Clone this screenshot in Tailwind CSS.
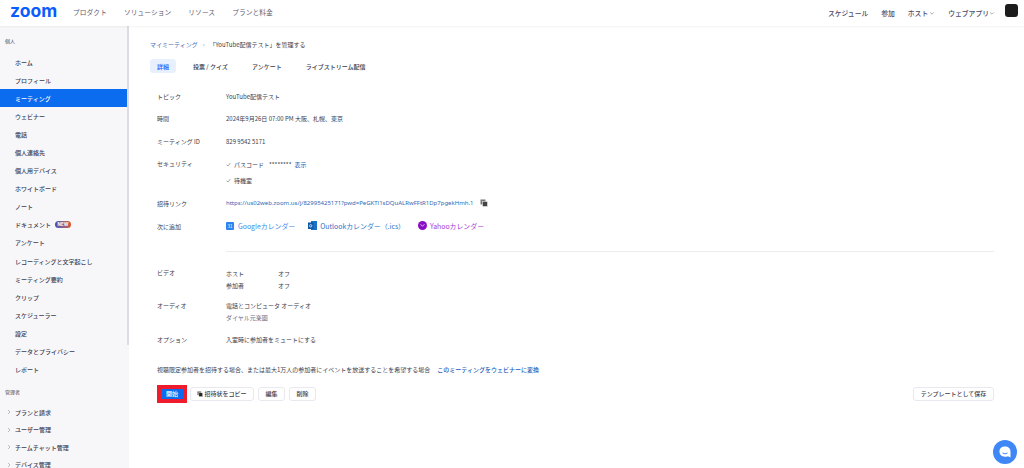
<!DOCTYPE html>
<html lang="ja">
<head>
<meta charset="utf-8">
<script src="https://cdn.jsdelivr.net/npm/@tailwindcss/browser@4"></script>
</head>
<body class="w-[1024px] h-[468px] overflow-hidden bg-white font-['Noto_Sans_CJK_JP','Noto_Sans',sans-serif] text-[6px] text-[#3b3b4a]">
<header class="h-[26px] flex items-center relative z-10 bg-white shadow-[0_1px_2px_rgba(0,0,0,0.05)]">
  <div class="ml-[10px] w-[48px] text-[#0b5cff] font-['Inter',sans-serif] font-bold text-[17.5px] leading-none -mt-[5px]">zoom</div>
  <nav class="ml-[15px] flex gap-[17px] text-[6.7px] text-[#5a5a70] tracking-[0.1px] -mt-[2px]">
    <span>プロダクト</span><span>ソリューション</span><span>リソース</span><span>プランと料金</span>
  </nav>
  <div class="ml-auto flex items-center text-[6.8px] text-[#4a4a68] font-medium">
    <span>スケジュール</span>
    <span class="ml-[13px]">参加</span>
    <span class="ml-[13px] flex items-center">ホスト<svg class="w-[6px] h-[6px] ml-[1px]" viewBox="0 0 10 10"><path d="M2 4l3 3 3-3" fill="none" stroke="#6e7680" stroke-width="1"/></svg></span>
    <span class="ml-[13px] flex items-center">ウェブアプリ<svg class="w-[6px] h-[6px]" viewBox="0 0 10 10"><path d="M2 4l3 3 3-3" fill="none" stroke="#6e7680" stroke-width="1"/></svg></span>
    <div class="ml-[10px] mr-[6px] w-[13px] h-[13px] rounded-[3px] bg-[#1c1c1c] -mt-[5px]"></div>
  </div>
</header>
<div class="flex h-[442px]">
  <aside class="w-[129px] shrink-0 bg-[#f7f7fa] relative overflow-hidden">
    <div class="absolute right-0 top-0 w-[2px] h-[319px] bg-[#dcdce2]"></div>
    <div class="pt-[10px] pl-[5px] text-[5px] h-[27px] leading-[9px] text-[#4a4a5a]">個人</div>
    <ul class="w-[127px] text-[6px] font-medium text-[#3c3c50]">
      <li class="h-[18.1px] pl-[15px] flex items-center">ホーム</li>
      <li class="h-[18.1px] pl-[15px] flex items-center">プロフィール</li>
      <li class="h-[18.1px] pl-[15px] flex items-center bg-[#0b6cf0] text-white">ミーティング</li>
      <li class="h-[18.1px] pl-[15px] flex items-center">ウェビナー</li>
      <li class="h-[18.1px] pl-[15px] flex items-center">電話</li>
      <li class="h-[18.1px] pl-[15px] flex items-center">個人連絡先</li>
      <li class="h-[18.1px] pl-[15px] flex items-center">個人用デバイス</li>
      <li class="h-[18.1px] pl-[15px] flex items-center">ホワイトボード</li>
      <li class="h-[18.1px] pl-[15px] flex items-center">ノート</li>
      <li class="h-[18.1px] pl-[15px] flex items-center">ドキュメント<span class="ml-[4px] w-[16px] h-[7px] rounded-full bg-gradient-to-r from-[#3d4fc4] to-[#d9541e] text-white text-[4.5px] leading-[7px] text-center font-bold font-['Inter',sans-serif]">NEW</span></li>
      <li class="h-[18.1px] pl-[15px] flex items-center">アンケート</li>
      <li class="h-[18.1px] pl-[15px] flex items-center">レコーディングと文字起こし</li>
      <li class="h-[18.1px] pl-[15px] flex items-center">ミーティング要約</li>
      <li class="h-[18.1px] pl-[15px] flex items-center">クリップ</li>
      <li class="h-[18.1px] pl-[15px] flex items-center">スケジューラー</li>
      <li class="h-[18.1px] pl-[15px] flex items-center">設定</li>
      <li class="h-[18.1px] pl-[15px] flex items-center">データとプライバシー</li>
      <li class="h-[18.1px] pl-[15px] flex items-center">レポート</li>
    </ul>
    <div class="pt-[8px] pl-[5px] text-[5px] h-[25px] leading-[9px] text-[#4a4a5a]">管理者</div>
    <ul class="text-[6px] font-medium text-[#3c3c50]">
      <li class="h-[17.4px] pl-[7px] flex items-center"><svg class="w-[4px] h-[6px] mr-[4px]" viewBox="0 0 4 6"><path d="M1 1l2 2-2 2" fill="none" stroke="#a0a0ad" stroke-width=".7"/></svg>プランと請求</li>
      <li class="h-[17.4px] pl-[7px] flex items-center"><svg class="w-[4px] h-[6px] mr-[4px]" viewBox="0 0 4 6"><path d="M1 1l2 2-2 2" fill="none" stroke="#a0a0ad" stroke-width=".7"/></svg>ユーザー管理</li>
      <li class="h-[17.4px] pl-[7px] flex items-center"><svg class="w-[4px] h-[6px] mr-[4px]" viewBox="0 0 4 6"><path d="M1 1l2 2-2 2" fill="none" stroke="#a0a0ad" stroke-width=".7"/></svg>チームチャット管理</li>
      <li class="h-[17.4px] pl-[7px] flex items-center"><svg class="w-[4px] h-[6px] mr-[4px]" viewBox="0 0 4 6"><path d="M1 1l2 2-2 2" fill="none" stroke="#a0a0ad" stroke-width=".7"/></svg>デバイス管理</li>
    </ul>
  </aside>
  <main class="flex-1 pl-[21px] pr-[30px] relative">
    <div class="pt-[13px] h-[33px] leading-[11px] flex items-start">
      <span class="text-[#3f6cb5]">マイミーティング</span><span class="mx-[5px] text-[#8a8a99]">›</span><span>「YouTube配信テスト」を管理する</span>
    </div>
    <div class="flex items-center h-[14px] font-medium">
      <span class="w-[26px] h-[14px] rounded-[3px] bg-[#e8f0fe] text-[#0b5cff] flex items-center justify-center">詳細</span>
      <span class="ml-[17px]">投票 / クイズ</span>
      <span class="ml-[24px]">アンケート</span>
      <span class="ml-[24px]">ライブストリーム配信</span>
    </div>
    <div class="pl-[7px] mt-[12px]">
      <div class="flex h-[22.5px] items-center"><div class="w-[69px]">トピック</div><div>YouTube配信テスト</div></div>
      <div class="flex h-[22.5px] items-center"><div class="w-[69px]">時間</div><div>2024年9月26日 07:00 PM 大阪、札幌、東京</div></div>
      <div class="flex h-[22.5px] items-center"><div class="w-[69px]">ミーティング ID</div><div>829 9542 5171</div></div>
      <div class="flex h-[39px] pt-[6px]"><div class="w-[69px] leading-[11px] -mt-[1px]">セキュリティ</div>
        <div class="leading-[11px]">
          <div class="flex items-center h-[11px]"><svg class="w-[5px] h-[5px] mr-[3px]" viewBox="0 0 5 5"><path d="M.6 2.700l1.300 1.300L4.400 1" fill="none" stroke="#666" stroke-width=".6"/></svg>パスコード<span class="ml-[5px]">********</span><span class="ml-[3px] text-[#1d5bb8]">表示</span></div>
          <div class="flex items-center h-[11px] mt-[5px]"><svg class="w-[5px] h-[5px] mr-[3px]" viewBox="0 0 5 5"><path d="M.6 2.700l1.300 1.300L4.400 1" fill="none" stroke="#666" stroke-width=".6"/></svg>待機室</div>
        </div>
      </div>
      <div class="flex h-[23px] items-center"><div class="w-[69px]">招待リンク</div>
        <div class="flex items-center text-[#2d6ab8]"><span class="font-['Noto_Sans',sans-serif]">https://us02web.zoom.us/j/82995425171?pwd=PeGKTl1sDQuALRwFFtR1Dp7pgekHmh.1</span>
          <svg class="ml-[6px] w-[8px] h-[8px]" viewBox="0 0 8 8"><rect x="0.5" y="0.5" width="5" height="5" fill="#777"/><rect x="2.500" y="2.500" width="5" height="5" fill="#444" stroke="#fff" stroke-width=".5"/></svg>
        </div>
      </div>
      <div class="flex h-[23px] items-center"><div class="w-[69px]">次に追加</div>
        <div class="flex items-center text-[6.9px]">
          <svg class="w-[8px] h-[8px] mr-[4px]" viewBox="0 0 8 8"><rect width="8" height="8" rx="1" fill="#2d84f0"/><text x="4" y="6" font-size="4.500" fill="#fff" text-anchor="middle">31</text></svg>
          <span class="text-[#3d8af0]">Googleカレンダー</span>
          <svg class="ml-[13px] w-[9px] h-[9px] mr-[3px]" viewBox="0 0 9 9"><rect x="3" y="0" width="6" height="9" fill="#1a73c8"/><rect x="0" y="1.500" width="5.500" height="6.500" fill="#0f5aa8"/><circle cx="2.700" cy="4.800" r="1.200" fill="none" stroke="#fff" stroke-width=".7"/></svg>
          <span class="text-[#2f74c8]">Outlookカレンダー（.ics）</span>
          <svg class="ml-[13px] w-[9px] h-[9px] mr-[3px]" viewBox="0 0 9 9"><circle cx="4.500" cy="4.500" r="4.500" fill="#8a0fc4"/><path d="M2.500 3.500l2 1.500 2-1.500" fill="none" stroke="#fff" stroke-width=".7"/></svg>
          <span class="text-[#a63cd8]">Yahooカレンダー</span>
        </div>
      </div>
      <div class="ml-[69px] mt-[13px] border-t border-[#ececf0] h-0"></div>
      <div class="flex mt-[15px] h-[31px]"><div class="w-[69px] leading-[11px]">ビデオ</div>
        <div class="grid grid-cols-[52px_auto] auto-rows-[12px] items-center mt-[1px]">
          <span>ホスト</span><span>オフ</span><span>参加者</span><span>オフ</span>
        </div>
      </div>
      <div class="flex mt-[2px] h-[34px]"><div class="w-[69px] leading-[11px]">オーディオ</div>
        <div class="leading-[12px]"><div>電話とコンピュータ オーディオ</div><div class="text-[#6a6a80]">ダイヤル元楽園</div></div>
      </div>
      <div class="flex leading-[11px]"><div class="w-[69px]">オプション</div><div>入室時に参加者をミュートにする</div></div>
      <div class="flex mt-[19px] leading-[11px]"><span>視聴限定参加者を招待する場合、または最大1万人の参加者にイベントを放送することを希望する場合</span><span class="ml-[7px] text-[#1d5bb8] font-medium">このミーティングをウェビナーに変換</span></div>
      <div class="flex items-center mt-[10px]">
        <div class="w-[30px] h-[18px] bg-[#ef1c2e] flex items-center justify-center"><div class="w-[23px] h-[10px] rounded-[1px] bg-[#0b6cf0] text-white text-[6px] font-medium flex items-center justify-center">開始</div></div>
        <div class="ml-[3px] h-[14px] w-[64px] border border-[#e8e8ee] rounded-[3px] flex items-center justify-center font-medium"><svg class="w-[6px] h-[6px] mr-[1px]" viewBox="0 0 8 8"><rect x="0.5" y="0.5" width="5" height="5" fill="#777"/><rect x="2.500" y="2.500" width="5" height="5" fill="#222" stroke="#fff" stroke-width=".5"/></svg>招待状をコピー</div>
        <div class="ml-[4px] h-[14px] w-[27px] border border-[#e8e8ee] rounded-[3px] flex items-center justify-center font-medium">編集</div>
        <div class="ml-[4px] h-[14px] w-[27px] border border-[#e8e8ee] rounded-[3px] flex items-center justify-center font-medium">削除</div>
        <div class="ml-auto h-[14px] w-[81px] border border-[#e8e8ee] rounded-[3px] flex items-center justify-center font-medium">テンプレートとして保存</div>
      </div>
    </div>
    <div class="absolute right-[7px] bottom-[4px] w-[24px] h-[24px] rounded-full bg-[#3f86f7] flex items-center justify-center">
      <svg class="w-[14px] h-[14px]" viewBox="0 0 14 14"><path d="M7 1.500c3.300 0 5.500 2 5.500 5v6l-2.500-1.300c-1 .4-2 .5-3 .5-3.300 0-5.500-2-5.500-5.200s2.200-5 5.500-5z" fill="#fff"/><path d="M4.500 8q2.500 1.800 5 0" fill="none" stroke="#3f86f7" stroke-width="1"/></svg>
    </div>
  </main>
</div>
</body>
</html>
